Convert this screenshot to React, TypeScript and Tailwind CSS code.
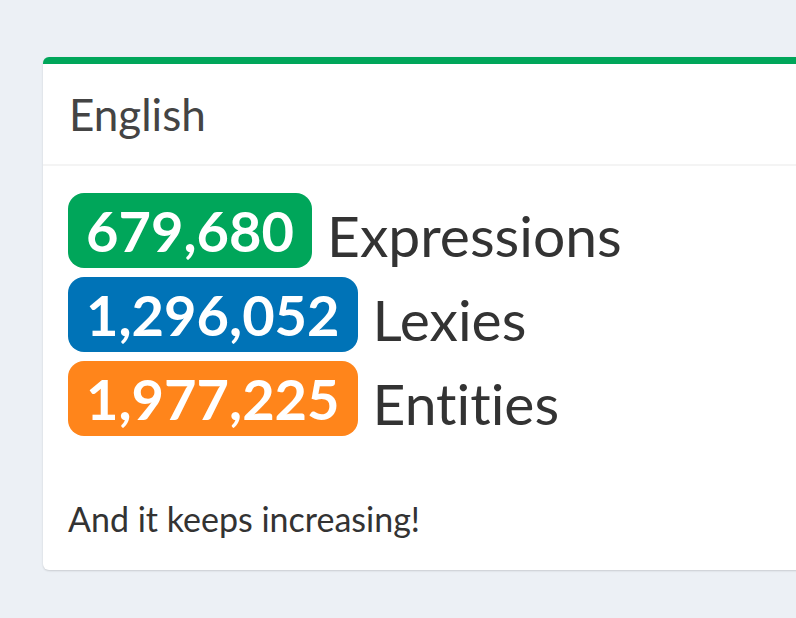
import React from "react";

type Stat = { value: string; label: string; color: string };

const stats: Stat[] = [
  { value: "679,680", label: "Expressions", color: "bg-[#00a65a]" },
  { value: "1,296,052", label: "Lexies", color: "bg-[#0073b7]" },
  { value: "1,977,225", label: "Entities", color: "bg-[#ff851b]" },
];

export default function App() {
  return (
    <main
      className="min-h-screen overflow-hidden bg-[#ecf0f5] pl-[43px] pt-[57px] text-[#333] [font-variant-ligatures:none]"
      style={{ fontFamily: "Lato, 'Open Sans', sans-serif" }}
    >
      <div className="w-[800px] rounded-[6px] border-t-[7px] border-[#00a65a] bg-white shadow-[0_1px_2px_rgba(0,0,0,0.15)]">
        <div className="flex h-[102px] items-center border-b-2 border-[#f4f4f4] px-[26px]">
          <h3 className="text-[44px] leading-none text-[#444]">English</h3>
        </div>
        <div className="px-[25px] pb-[34px] pt-[27px]">
          <div className="flex flex-col gap-[9px]">
            {stats.map((s) => (
              <div key={s.label} className="flex items-center gap-[15px]">
                <span
                  className={`${s.color} flex h-[75px] items-center rounded-[16px] px-[18px] text-[56px] font-bold leading-none text-white`}
                >
                  {s.value}
                </span>
                <span className="pt-[9px] text-[57px] leading-none">{s.label}</span>
              </div>
            ))}
          </div>
          <p className="mt-[66px] text-[34px] leading-none">And it keeps increasing!</p>
        </div>
      </div>
    </main>
  );
}
